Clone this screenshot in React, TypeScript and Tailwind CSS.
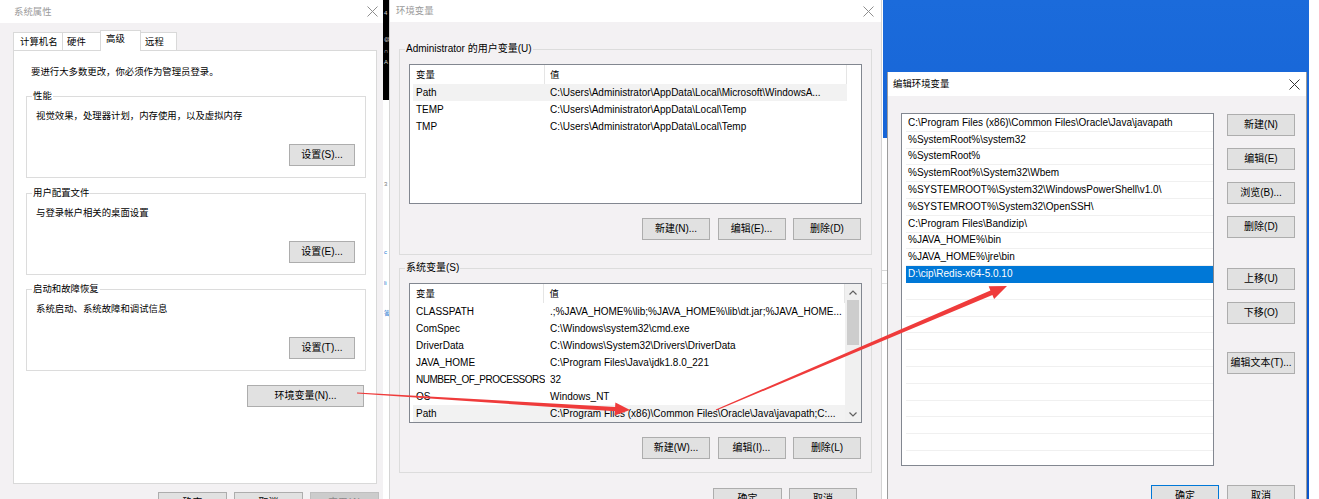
import React from "react";

const font = "font-['Liberation_Sans','Noto_Sans_CJK_SC',sans-serif]";

function CloseX({ className = "" }: { className?: string }) {
  return (
    <svg width="11" height="11" viewBox="0 0 11 11" className={className}>
      <path d="M0.5 0.5 L10.5 10.5 M10.5 0.5 L0.5 10.5" stroke="currentColor" strokeWidth="1" fill="none" />
    </svg>
  );
}

function Chevron({ up }: { up?: boolean }) {
  return (
    <svg width="8" height="5" viewBox="0 0 8 5">
      <path d={up ? "M0.5 4.5 L4 1 L7.5 4.5" : "M0.5 0.5 L4 4 L7.5 0.5"} stroke="#606060" strokeWidth="1.2" fill="none" />
    </svg>
  );
}

type BtnProps = { label: string; className?: string; variant?: "normal" | "default" | "disabled" };

function Btn({ label, className = "", variant = "normal" }: BtnProps) {
  const look =
    variant === "default"
      ? "border-[#0078d7] bg-[#e1e1e1] text-black"
      : variant === "disabled"
        ? "border-[#bfbfbf] bg-[#cccccc] text-[#8a8a8a]"
        : "border-[#adadad] bg-[#e1e1e1] text-black";
  return (
    <div className={`h-[22px] flex items-center justify-center border text-[10px] leading-none whitespace-nowrap shrink-0 ${look} ${className}`}>
      {label}
    </div>
  );
}

function PerfGroup({ title, text, button, className = "" }: { title: string; text: string; button: string; className?: string }) {
  return (
    <div className={`relative h-[82px] border border-[#dcdcdc] flex flex-col ${className}`}>
      <span className="absolute left-[5px] -top-[7px] bg-white px-px text-[9.4px] leading-[12px]">{title}</span>
      <p className="pl-[9px] pt-[13px] text-[9.4px] leading-[12px]">{text}</p>
      <Btn label={button} className="mt-auto self-end mr-[10px] mb-[11px] w-[66px]" />
    </div>
  );
}

type Row = [string, string];

function Scrollbar() {
  return (
    <div className="w-[16px] bg-[#f0f0f0] flex flex-col items-center shrink-0">
      <div className="h-[16px] flex items-center justify-center">
        <Chevron up />
      </div>
      <div className="w-[12px] h-[45px] bg-[#cdcdcd]" />
      <div className="flex-1" />
      <div className="h-[16px] flex items-center justify-center">
        <Chevron />
      </div>
    </div>
  );
}

function VarList({ rows, highlight, scroll = false, className = "" }: { rows: Row[]; highlight: number; scroll?: boolean; className?: string }) {
  return (
    <div className={`border border-[#828790] bg-white flex overflow-hidden ${className}`}>
      <div className="flex-1 min-w-0 flex flex-col">
        <div className="h-[19px] flex shrink-0 text-[9.4px] leading-[12px]">
          <div className="w-[135px] border-r border-[#e5e5e5] pl-[6px] flex items-center">变量</div>
          <div className="w-[302px] border-r border-[#e5e5e5] pl-[5px] flex items-center">值</div>
        </div>
        {rows.map(([k, v], i) => (
          <div
            key={i}
            className={`h-[17px] ml-[3px] w-[434px] flex items-center text-[10px] leading-[12px] shrink-0 ${i === highlight ? "bg-[#f2f2f2]" : ""}`}
          >
            <div className={`w-[132px] pl-[3px] whitespace-nowrap overflow-hidden ${k.length > 16 ? "tracking-[-0.5px]" : ""}`}>{k}</div>
            <div className="w-[302px] pl-[5px] whitespace-nowrap overflow-hidden">{v}</div>
          </div>
        ))}
      </div>
      {scroll && <Scrollbar />}
    </div>
  );
}

function VarGroup({ title, rows, highlight, scroll, buttons, className = "" }: { title: string; rows: Row[]; highlight: number; scroll?: boolean; buttons: string[]; className?: string }) {
  return (
    <div className={`relative border border-[#dcdcdc] flex flex-col ${className}`}>
      <span className="absolute left-[5px] -top-[7px] bg-[#f3f1f3] px-px text-[10px] leading-[12px] whitespace-nowrap">{title}</span>
      <VarList rows={rows} highlight={highlight} scroll={scroll} className="mt-[14px] ml-[9px] w-[453px] h-[140px]" />
      <div className="flex justify-end gap-[7.5px] mt-[14px] mr-[10px]">
        {buttons.map((b) => (
          <Btn key={b} label={b} className="w-[68px]" />
        ))}
      </div>
    </div>
  );
}

const userVars: Row[] = [
  ["Path", "C:\\Users\\Administrator\\AppData\\Local\\Microsoft\\WindowsA..."],
  ["TEMP", "C:\\Users\\Administrator\\AppData\\Local\\Temp"],
  ["TMP", "C:\\Users\\Administrator\\AppData\\Local\\Temp"],
];

const sysVars: Row[] = [
  ["CLASSPATH", ".;%JAVA_HOME%\\lib;%JAVA_HOME%\\lib\\dt.jar;%JAVA_HOME..."],
  ["ComSpec", "C:\\Windows\\system32\\cmd.exe"],
  ["DriverData", "C:\\Windows\\System32\\Drivers\\DriverData"],
  ["JAVA_HOME", "C:\\Program Files\\Java\\jdk1.8.0_221"],
  ["NUMBER_OF_PROCESSORS", "32"],
  ["OS", "Windows_NT"],
  ["Path", "C:\\Program Files (x86)\\Common Files\\Oracle\\Java\\javapath;C:..."],
];

const pathItems = [
  "C:\\Program Files (x86)\\Common Files\\Oracle\\Java\\javapath",
  "%SystemRoot%\\system32",
  "%SystemRoot%",
  "%SystemRoot%\\System32\\Wbem",
  "%SYSTEMROOT%\\System32\\WindowsPowerShell\\v1.0\\",
  "%SYSTEMROOT%\\System32\\OpenSSH\\",
  "C:\\Program Files\\Bandizip\\",
  "%JAVA_HOME%\\bin",
  "%JAVA_HOME%\\jre\\bin",
  "D:\\cip\\Redis-x64-5.0.10",
];

const SELECTED = 9;

function SystemProperties() {
  return (
    <div className="absolute left-0 top-0 w-[383px] h-[530px] bg-[#f3f1f3] flex flex-col">
      <div className="h-[23px] bg-white flex items-center justify-between pl-[14px] pr-[5px] shrink-0">
        <span className="text-[#9b9b9b] text-[9.4px] leading-[12px]">系统属性</span>
        <CloseX className="text-[#8e8e8e]" />
      </div>
      <div className="flex items-end h-[20px] ml-[13px] mt-[7px] text-[9.4px] leading-[12px]">
        <div className="h-[18px] w-[50px] border border-b-0 border-[#d9d9d9] bg-white pl-[6px] flex items-center">计算机名</div>
        <div className="h-[18px] w-[39px] -ml-px border border-b-0 border-[#d9d9d9] bg-white pl-[4px] flex items-center">硬件</div>
        <div className="relative z-10 h-[21px] -mb-px w-[41px] -ml-px border border-b-0 border-[#d9d9d9] bg-white pl-[5px] flex items-start pt-[2px]">高级</div>
        <div className="h-[18px] w-[37px] -ml-px border border-b-0 border-[#d9d9d9] bg-white pl-[4px] flex items-center">远程</div>
      </div>
      <div className="ml-[13px] w-[364px] h-[434px] border border-[#d9d9d9] bg-white flex flex-col">
        <p className="mt-[15px] pl-[17px] text-[9.4px] leading-[12px]">要进行大多数更改，你必须作为管理员登录。</p>
        <div className="mt-[18px] ml-[12px] w-[340px] flex flex-col gap-[14.5px]">
          <PerfGroup title="性能" text="视觉效果，处理器计划，内存使用，以及虚拟内存" button="设置(S)..." />
          <PerfGroup title="用户配置文件" text="与登录帐户相关的桌面设置" button="设置(E)..." />
          <PerfGroup title="启动和故障恢复" text="系统启动、系统故障和调试信息" button="设置(T)..." />
        </div>
        <Btn label="环境变量(N)..." className="mt-[14px] self-end mr-[12px] w-[117px]" />
      </div>
      <div className="flex gap-[7px] ml-[158px] mt-[8px]">
        <Btn label="确定" className="w-[69px]" />
        <Btn label="取消" className="w-[69px]" />
        <Btn label="应用(A)" className="w-[69px]" variant="disabled" />
      </div>
    </div>
  );
}

function BehindStrip() {
  return (
    <div className="absolute left-[383px] top-0 w-[6px] h-[499px] bg-white overflow-hidden flex flex-col text-[6px] leading-[8px]">
      <div className="h-[100px] bg-black text-[#d0d0d0] flex flex-col pl-[1px]">
        <span className="mt-[9px]">4</span>
        <span className="mt-[18px]">@</span>
        <span className="mt-[4px]">∩</span>
        <span className="mt-[3px]">A</span>
      </div>
      <span className="mt-[80px] pl-[1px] text-[#777]">3</span>
      <span className="mt-[60px] pl-[1px] text-[#2b7cd3]">c</span>
      <span className="mt-[23px] pl-[1px] text-[#2b7cd3]">li</span>
      <span className="mt-[22px] pl-[1px] text-[#2b7cd3]">答</span>
    </div>
  );
}

function EnvVariables() {
  return (
    <div className="absolute left-[389px] top-0 w-[493px] h-[530px] bg-[#f3f1f3] border-x border-[#d4d4d4] flex flex-col">
      <div className="h-[22px] bg-white flex items-center justify-between pl-[6px] pr-[7px] shrink-0">
        <span className="text-[#9b9b9b] text-[9.4px] leading-[12px]">环境变量</span>
        <CloseX className="text-[#8e8e8e]" />
      </div>
      <div className="px-[9px] flex flex-col">
        <VarGroup
          title="Administrator 的用户变量(U)"
          rows={userVars}
          highlight={0}
          buttons={["新建(N)...", "编辑(E)...", "删除(D)"]}
          className="mt-[27px] h-[206px]"
        />
        <VarGroup
          title="系统变量(S)"
          rows={sysVars}
          highlight={6}
          scroll
          buttons={["新建(W)...", "编辑(I)...", "删除(L)"]}
          className="mt-[13px] h-[205px]"
        />
        <div className="flex justify-end gap-[7px] mt-[15px] mr-[15px]">
          <Btn label="确定" className="w-[69px]" />
          <Btn label="取消" className="w-[68px]" />
        </div>
      </div>
    </div>
  );
}

function Desktop() {
  return (
    <>
      <div className="absolute left-[883px] top-0 w-[426px] h-[499px] bg-linear-to-b from-[#1b6bdb] to-[#0b55cc]" />
      <div className="absolute left-[882px] top-[138px] w-[5px] h-[361px] bg-white flex flex-col">
        <div className="mt-[132px] h-px bg-[#d6d6d6]" />
        <div className="mt-[12px] h-px bg-[#e2e2e2]" />
      </div>
    </>
  );
}

function EditPath() {
  const rows = Array.from({ length: 21 }, (_, i) => pathItems[i] ?? "");
  return (
    <div className="absolute left-[887px] top-[72px] w-[420px] h-[440px] bg-[#f3f1f3] border-x border-[#9c9c9c] flex flex-col">
      <div className="h-[24px] bg-white flex items-center justify-between pl-[5px] pr-[6px] shrink-0">
        <span className="text-black text-[9.4px] leading-[12px]">编辑环境变量</span>
        <CloseX className="text-[#333]" />
      </div>
      <div className="flex">
        <div className="mt-[17px] ml-[13px] w-[313px] h-[353px] border border-[#828790] bg-white overflow-hidden flex flex-col pt-[1px]">
          {rows.map((r, i) => (
            <div
              key={i}
              className={`h-[16.8px] ml-[4px] pl-[2px] shrink-0 flex items-center text-[10px] leading-[12px] whitespace-nowrap border-b ${
                i === SELECTED ? "bg-[#0078d7] text-white border-[#0078d7]" : "border-[#f0f0f0] text-black"
              }`}
            >
              {r}
            </div>
          ))}
        </div>
        <div className="ml-[13px] mt-[18px] w-[68px] flex flex-col">
          <Btn label="新建(N)" />
          <Btn label="编辑(E)" className="mt-[12px]" />
          <Btn label="浏览(B)..." className="mt-[12px]" />
          <Btn label="删除(D)" className="mt-[12px]" />
          <Btn label="上移(U)" className="mt-[30px]" />
          <Btn label="下移(O)" className="mt-[12px]" />
          <Btn label="编辑文本(T)..." className="mt-[28px]" />
        </div>
      </div>
      <div className="flex justify-end gap-[8px] mt-[19px] mr-[11px]">
        <Btn label="确定" variant="default" className="w-[68px]" />
        <Btn label="取消" className="w-[68px]" />
      </div>
    </div>
  );
}

function Arrows() {
  return (
    <svg className="absolute inset-0 pointer-events-none" width="1319" height="499" viewBox="0 0 1319 499">
      <polygon
        fill="#ef3b3b"
        points="357,392.4 615.1,406.9 615.4,402.6 630,410 614.6,415.6 614.9,411.3 357,393.6"
      />
      <polygon
        fill="#ef3b3b"
        points="715.8,409.4 990.4,290.4 988.7,286.3 1007,286 994.1,299.1 992.4,295 716.2,410.6"
      />
    </svg>
  );
}

export default function App() {
  return (
    <div className={`relative w-[1319px] h-[499px] overflow-hidden bg-white text-black ${font}`}>
      <Desktop />
      <BehindStrip />
      <SystemProperties />
      <EnvVariables />
      <EditPath />
      <Arrows />
    </div>
  );
}
